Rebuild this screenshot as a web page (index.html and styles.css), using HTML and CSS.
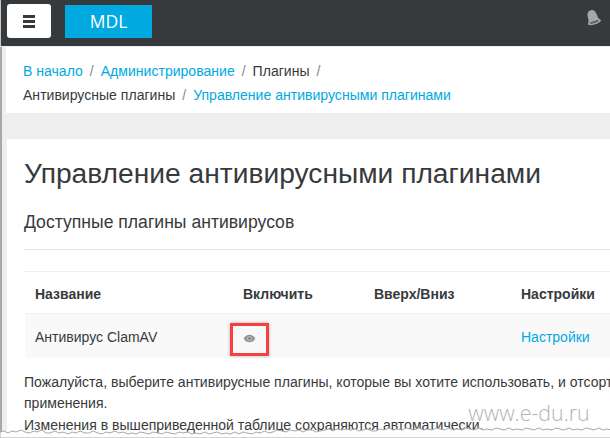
FILE: index.html
```html
<!DOCTYPE html>
<html lang="ru">
<head>
<meta charset="utf-8">
<title>Управление антивирусными плагинами</title>
<link rel="stylesheet" href="styles.css">
</head>
<body>
<header class="navbar">
  <button class="menu-btn" aria-label="Меню"><span></span><span></span><span></span></button>
  <a class="brand">MDL</a>
  <svg class="bell" viewBox="0 0 18 17" width="18" height="17"><g transform="rotate(-18 9 9)"><path d="M9 0.800C11.800 0.800 13.400 3 13.600 6L13.900 9.500C14 11 14.800 12 15.800 13.200C16 14.800 12.800 15.600 9 15.600S2 14.800 2.200 13.200C3.200 12 4 11 4.100 9.500L4.400 6C4.600 3 6.200 0.800 9 0.800Z" fill="#a5a7a9"/><path d="M4 13C6.500 12 11.500 12 14 13C12 14.400 6 14.400 4 13Z" fill="#373a3c"/><path d="M6.500 13C8 12.700 10 12.700 11.500 13C10 13.500 8 13.500 6.500 13Z" fill="#a5a7a9"/></g></svg>
</header>
<div class="page">
  <nav class="crumbs">
    <div class="crumb-line"><a>В начало</a><i>/</i><a>Администрирование</a><i>/</i><span>Плагины</span><i>/</i></div>
    <div class="crumb-line"><span>Антивирусные плагины</span><i>/</i><a>Управление антивирусными плагинами</a></div>
  </nav>
  <main class="card">
    <h1>Управление антивирусными плагинами</h1>
    <h2>Доступные плагины антивирусов</h2>
    <table class="plugins">
      <thead>
        <tr><th class="c1">Название</th><th class="c2">Включить</th><th class="c3">Вверх/Вниз</th><th class="c4">Настройки</th></tr>
      </thead>
      <tbody>
        <tr>
          <td>Антивирус ClamAV</td>
          <td class="eye-cell">
            <span class="marker">
              <svg class="eye" viewBox="0 0 14 10" width="13" height="9"><path d="M0.500 5C2.200 2 4.400 0.800 7 0.800S11.800 2 13.500 5C11.800 8 9.600 9.200 7 9.200S2.200 8 0.500 5Z" fill="#949494"/><circle cx="7" cy="5" r="2.600" fill="#c9c9c9"/><circle cx="7" cy="5" r="1.600" fill="#848484"/></svg>
            </span>
          </td>
          <td></td>
          <td><a>Настройки</a></td>
        </tr>
      </tbody>
    </table>
    <p class="note">Пожалуйста, выберите антивирусные плагины, которые вы хотите использовать, и отсортируйте их в порядке<br>применения.<br>Изменения в вышеприведенной таблице сохраняются автоматически.</p>
  </main>
</div>
<div class="watermark">www.e-du.ru</div>
<svg class="torn" viewBox="0 0 610 438" width="610" height="438"><path d="M0 438V432l4-1 4 2 4-2 4 1 5-2 4 2 4 1 5-2 3 1 5-2 4 3 4 0 5-2 4 2 4-1 5 2 4-2 4 1 4-2 5 2 4 0 4-2 5 2 4 1 4-2 4 1 5-2 4 2 4-1 5 2 4-1 4 1 4-2 5 1 4 1 4-2 5 1 4 1 4-2 4 1 5 1 4-2 4 1 5-1 4 2 4-1 4 1 5-2 4 2 4-1 4-1 5 2 4-1 4 1 5-2 4 2 4-2 4 1 5 1 4-2 4 1 5-2 4 2 4-1 4-2 5 1 4 1 4-2 5 1 4-1 4 2 4-2 5 0 4 2 4-1 5-1 4-1 4 2 4-2 5 1 4-1 4 1 5-1 4 2 4-1 4-1 5 2 4 0 4-2l4 1 5-2 4 2 4-1 5 1 4-2 4 1l4 1 5-2 4 2 4-1 5 1 4-2 4 1l4 1 5-2 4 2 4-1 5 1 4-2 4 1l4 1 5-2 4 2 4-1 5 1 4-2 4 1l4 1 5-2 4 2 4-1 5 1 4-2 4 1l4 1 5-2 4 2 4-1 5 1 4-2 4 1l4 1 5-2 4 2 4-1 5 1 4-2 4 1l4 1 5-2 4 2 4-1 5 1 4-2 4 1V438Z" fill="#fff" stroke="#a8a8a8" stroke-width="1"/></svg>
</body>
</html>
```
FILE: styles.css
```css
html, body { margin: 0; padding: 0; }
body {
  width: 610px;
  height: 438px;
  overflow: hidden;
  position: relative;
  font-family: "Liberation Sans", Arial, sans-serif;
  font-size: 14px;
  color: #373a3c;
  background: #eceeef;
}
a { color: #00a9e0; text-decoration: none; }

.navbar {
  height: 46px;
  background: #373a3c;
  display: flex;
  align-items: center;
  padding-left: 6px;
  border-left: 1px solid #c8c8c8;
  border-bottom: 1px solid #eee;
  position: relative;
}
.menu-btn {
  width: 44px;
  height: 34px;
  margin-bottom: 4px;
  padding: 0;
  border: 0;
  border-radius: 3px;
  background: #fff;
  display: flex;
  flex-direction: column;
  align-items: center;
  justify-content: center;
  gap: 2px;
}
.menu-btn span { width: 12px; height: 3px; background: #373a3c; display: block; }
.brand {
  margin-left: 14px;
  margin-bottom: 4px;
  width: 87px;
  height: 33px;
  background: #00a9e0;
  color: #fff;
  font-family: "Open Sans", sans-serif;
  font-size: 17.500px;
  line-height: 33px;
  text-align: center;
}
.bell { position: absolute; right: 8px; top: 9px; }

.page {
  border-left: 2px solid #a8a8a8;
  padding-left: 4px;
  background: #eee;
  height: 391px;
}
.crumbs {
  background: #fff;
  height: 66px;
  padding: 12px 0 0 17px;
  box-sizing: border-box;
  margin-bottom: 26px;
}
.crumb-line { height: 24px; line-height: 24px; white-space: nowrap; font-size: 14.050px; }
.crumb-line i { font-style: normal; color: #818a91; padding: 0 7px; }
.crumb-line span { color: #373a3c; }

.card {
  background: #fff;
  margin-left: 1px;
  padding: 0 0 0 17px;
  height: 300px;
  overflow: hidden;
  white-space: nowrap;
}
h1 {
  margin: 0;
  padding-top: 17px;
  font-size: 28.200px;
  line-height: 34px;
  font-weight: 400;
  color: #373a3c;
}
h2 {
  margin: 21px 0 0;
  font-size: 17.600px;
  line-height: 22px;
  font-weight: 400;
  padding-bottom: 16px;
  border-bottom: 1px solid #e5e5e5;
  width: 610px;
}
.plugins {
  margin: 21px 0 0 1px;
  border-collapse: collapse;
  width: 585px;
  table-layout: fixed;
  font-size: 14px;
}
.plugins th {
  box-sizing: border-box;
  height: 42px;
  padding: 2px 0 0 10px;
  text-align: left;
  font-weight: 700;
  border-top: 1px solid #eceeef;
  border-bottom: 1px solid #f0f0f0;
}
.plugins td {
  box-sizing: border-box;
  height: 44px;
  padding: 3px 0 0 10px;
  background: #f9f9f9;
}
.c1 { width: 208px; }
.c2 { width: 131px; }
.c3 { width: 147px; }
.eye-cell { position: relative; }
.marker {
  position: absolute;
  left: -3px;
  top: 9px;
  width: 33px;
  height: 27px;
  border: 3px solid #f44242;
  box-shadow: 0 0 3px rgba(0,0,0,.3);
  display: flex;
  align-items: center;
  justify-content: center;
}
.eye { margin-bottom: 3px; }
.note {
  margin: 14px 0 0;
  line-height: 21.500px;
  font-size: 14.050px;
}

.watermark {
  position: absolute;
  left: 462px;
  top: 396px;
  width: 134px;
  height: 33px;
  color: #b4b4b4;
  font-family: "Open Sans", sans-serif;
  font-size: 21.400px;
  font-weight: 300;
  line-height: 33px;
  text-align: center;
}
.torn { position: absolute; left: 0; top: 0; pointer-events: none; }
```
